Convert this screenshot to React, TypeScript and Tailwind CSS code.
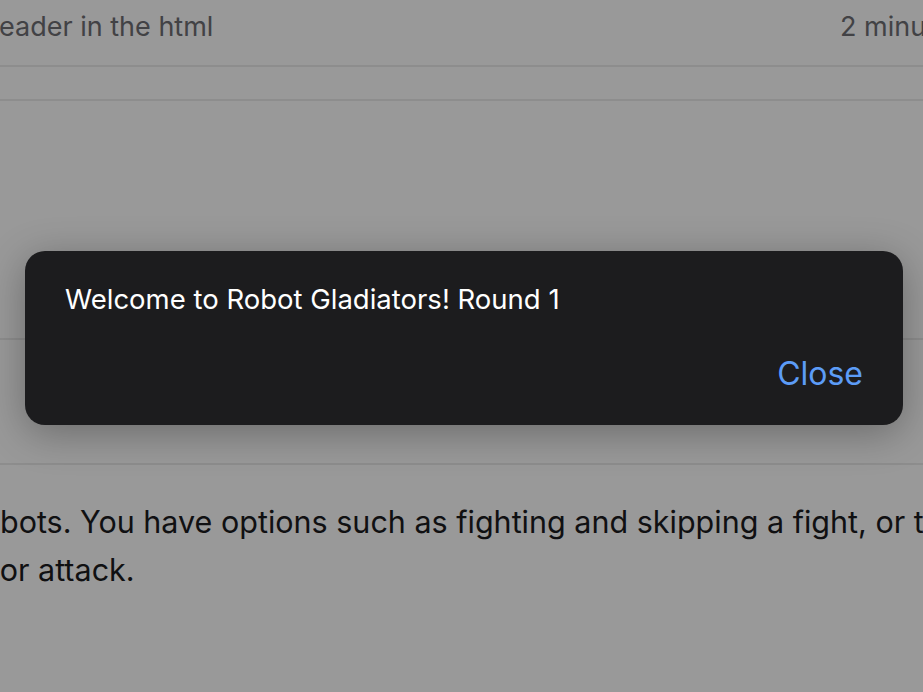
import { useState } from "react";

function App() {
    const [open, setOpen] = useState(true);

    return (
        <div className="relative w-[923px] h-[692px] overflow-hidden bg-white" style={{ fontFamily: "Inter, 'Noto Sans', sans-serif" }}>
            {/* page behind the dialog */}
            <div className="w-[1400px]">
                <div className="flex h-[67px] border-b-2 border-[#ececec] pt-[7px] text-[27px] text-[#6e6e73] -ml-[17px]">
                    <span className="w-[857px] shrink-0 whitespace-nowrap">header in the html</span>
                    <span className="whitespace-nowrap">2 minutes ago</span>
                </div>
                <div className="h-[34px] border-b-2 border-[#ececec]"></div>
                <div className="h-[239px] border-b-2 border-[#ececec]"></div>
                <div className="h-[125px] border-b-2 border-[#ececec]"></div>
                <p className="pt-[33px] -ml-[110px] whitespace-nowrap text-[30.5px] leading-[48px] text-[#1c1c1e]">
                    Fight robots. You have options such as fighting and skipping a fight, or to upgrade your
                    <br />
                    <span className="pl-[12px]">health or attack.</span>
                </p>
            </div>

            {/* dim overlay */}
            <div className="absolute inset-0 bg-black/40"></div>

            {open && (
                <div className="absolute left-[25px] top-[251px] w-[878px] h-[174px] rounded-[20px] bg-[#1c1c1e] shadow-[0_8px_40px_rgba(0,0,0,0.3)] flex flex-col px-[40px] pt-[31px]">
                    <div className="text-[27.5px] leading-[34px] text-white">Welcome to Robot Gladiators! Round 1</div>
                    <div className="flex justify-end mt-[38px]">
                        <button onClick={() => setOpen(false)} className="text-[32px] leading-[40px] text-[#5c9cf7]">
                            Close
                        </button>
                    </div>
                </div>
            )}
        </div>
    );
}

export default App;
